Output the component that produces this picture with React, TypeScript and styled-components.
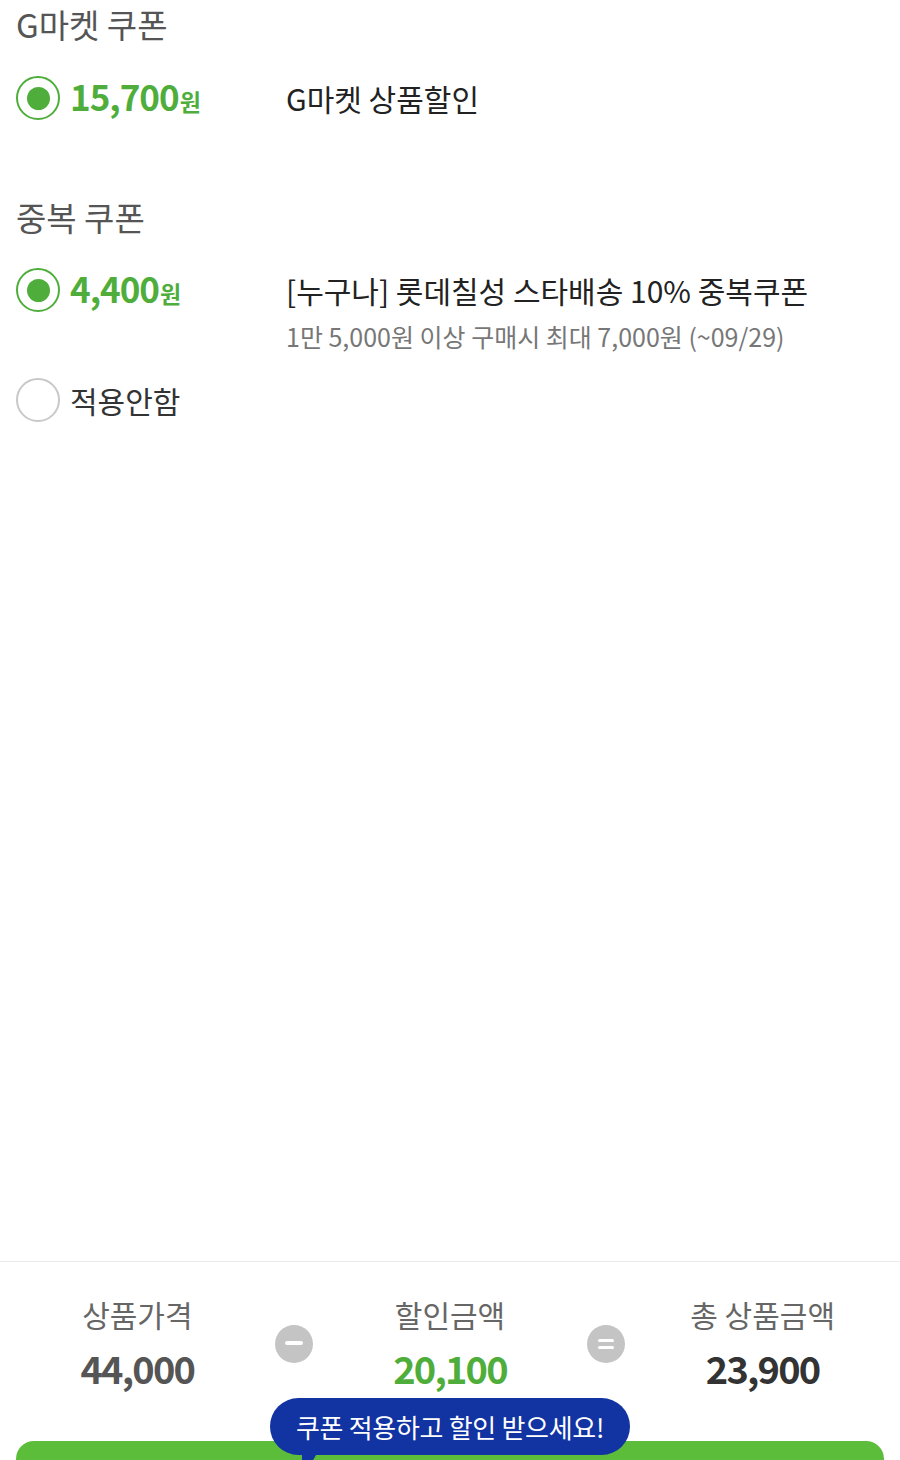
import { Fragment } from 'react'
import styled, { createGlobalStyle } from 'styled-components'

const GlobalStyle = createGlobalStyle`
  html, body {
    margin: 0;
    padding: 0;
    background: #fff;
  }
  body {
    font-family: 'Noto Sans CJK KR', 'Noto Sans', sans-serif;
    color: #222;
  }
`

const Page = styled.div`
  width: 900px;
  height: 1460px;
  display: flex;
  flex-direction: column;
  overflow: hidden;
`

const Content = styled.div`
  flex: 1;
  padding: 0 16px;
`

const SectionTitle = styled.div<{ $top: number }>`
  margin-top: ${(p) => p.$top}px;
  font-size: 33px;
  line-height: 48px;
  color: #555;
`

const OptionRow = styled.div<{ $top: number }>`
  margin-top: ${(p) => p.$top}px;
  display: flex;
  align-items: flex-start;
`

const Choice = styled.div`
  width: 270px;
  flex-shrink: 0;
  display: flex;
  align-items: center;
  gap: 10px;
  height: 44px;
`

const Radio = styled.div<{ $on?: boolean }>`
  width: 44px;
  height: 44px;
  box-sizing: border-box;
  border-radius: 50%;
  border: 2.5px solid ${(p) => (p.$on ? '#4fae3b' : '#c8c8c8')};
  display: flex;
  align-items: center;
  justify-content: center;
  flex-shrink: 0;
  &::after {
    content: '';
    display: ${(p) => (p.$on ? 'block' : 'none')};
    width: 23px;
    height: 23px;
    border-radius: 50%;
    background: #4fae3b;
  }
`

const Amount = styled.div`
  font-size: 35px;
  font-weight: 700;
  color: #4fae3b;
  letter-spacing: -1px;
  line-height: 44px;
  white-space: nowrap;
  small {
    font-size: 23px;
    margin-left: 1px;
  }
`

const NoneLabel = styled.div`
  font-size: 30px;
  line-height: 44px;
  color: #333;
`

const Desc = styled.div`
  display: flex;
  flex-direction: column;
`

const DescTitle = styled.div`
  font-size: 30px;
  line-height: 44px;
  color: #222;
  white-space: nowrap;
`

const DescSub = styled.div`
  margin-top: 4px;
  font-size: 25px;
  line-height: 40px;
  color: #777;
  white-space: nowrap;
`

const Footer = styled.div`
  height: 198px;
  flex-shrink: 0;
  border-top: 1px solid #ececec;
  position: relative;
  overflow: hidden;
`

const Summary = styled.div`
  padding-top: 32px;
  display: grid;
  grid-template-columns: 1fr 38px 1fr 38px 1fr;
  align-items: center;
`

const SumCol = styled.div`
  text-align: center;
`

const SumLabel = styled.div`
  font-size: 30px;
  line-height: 40px;
  color: #666;
`

const SumValue = styled.div<{ $color: string }>`
  margin-top: 12px;
  font-size: 38px;
  line-height: 44px;
  font-weight: 700;
  letter-spacing: -1.8px;
  color: ${(p) => p.$color};
`

const Operator = styled.div`
  width: 38px;
  height: 38px;
  border-radius: 50%;
  background: #c4c4c4;
  display: flex;
  align-items: center;
  justify-content: center;
  margin-top: 4px;
`

const SubmitButton = styled.div`
  margin: 51px 16px 0;
  height: 90px;
  border-radius: 18px;
  background: #5cbd3a;
`

const Bubble = styled.div`
  position: absolute;
  left: 270px;
  top: 136px;
  width: 360px;
  height: 57px;
  border-radius: 29px;
  background: #1233a2;
  color: #fff;
  font-size: 26px;
  display: flex;
  align-items: center;
  justify-content: center;
  letter-spacing: -0.3px;
  &::after {
    content: '';
    position: absolute;
    left: 32px;
    top: 50px;
    width: 0;
    height: 0;
    border-left: 10px solid #1233a2;
    border-right: 8px solid transparent;
    border-top: 14px solid #1233a2;
  }
`

const summary = [
  { label: '상품가격', value: '44,000', color: '#555' },
  { label: '할인금액', value: '20,100', color: '#4fae3b' },
  { label: '총 상품금액', value: '23,900', color: '#333' },
]

const Minus = () => (
  <svg width="18" height="6" viewBox="0 0 18 6">
    <rect x="0" y="0" width="18" height="4" rx="2" fill="#fff" />
  </svg>
)

const Equals = () => (
  <svg width="16" height="12" viewBox="0 0 16 12">
    <rect x="0" y="1" width="16" height="3" rx="1.5" fill="#fff" />
    <rect x="0" y="8" width="16" height="3" rx="1.5" fill="#fff" />
  </svg>
)

export default function App() {
  return (
    <Page>
      <GlobalStyle />
      <Content>
        <SectionTitle $top={0}>G마켓 쿠폰</SectionTitle>
        <OptionRow $top={28}>
          <Choice>
            <Radio $on />
            <Amount>
              15,700<small>원</small>
            </Amount>
          </Choice>
          <Desc>
            <DescTitle>G마켓 상품할인</DescTitle>
          </Desc>
        </OptionRow>

        <SectionTitle $top={73}>중복 쿠폰</SectionTitle>
        <OptionRow $top={27}>
          <Choice>
            <Radio $on />
            <Amount>
              4,400<small>원</small>
            </Amount>
          </Choice>
          <Desc>
            <DescTitle>[누구나] 롯데칠성 스타배송 10% 중복쿠폰</DescTitle>
            <DescSub>1만 5,000원 이상 구매시 최대 7,000원 (~09/29)</DescSub>
          </Desc>
        </OptionRow>
        <OptionRow $top={22}>
          <Choice>
            <Radio />
            <NoneLabel>적용안함</NoneLabel>
          </Choice>
        </OptionRow>
      </Content>

      <Footer>
        <Summary>
          {summary.map((s, i) => (
            <Fragment key={s.label}>
              {i > 0 && <Operator>{i === 1 ? <Minus /> : <Equals />}</Operator>}
              <SumCol>
                <SumLabel>{s.label}</SumLabel>
                <SumValue $color={s.color}>{s.value}</SumValue>
              </SumCol>
            </Fragment>
          ))}
        </Summary>
        <SubmitButton />
        <Bubble>쿠폰 적용하고 할인 받으세요!</Bubble>
      </Footer>
    </Page>
  )
}
